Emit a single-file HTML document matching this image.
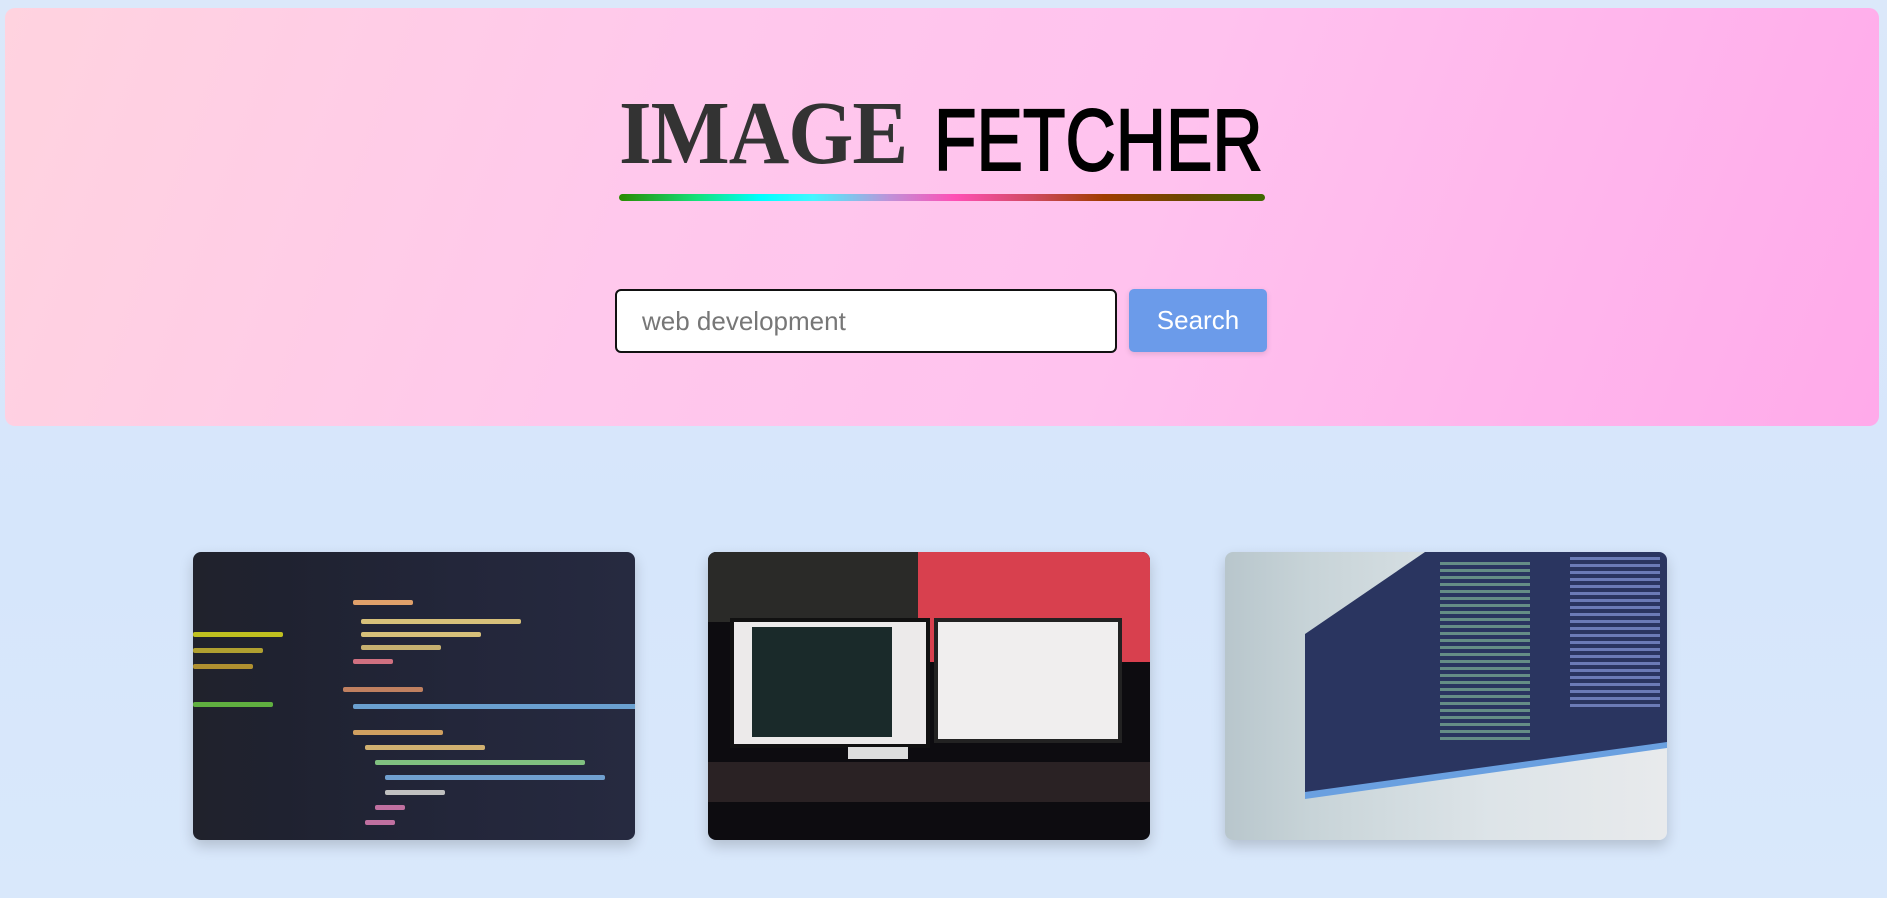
<!DOCTYPE html>
<html><head><meta charset="utf-8"><style>
*{margin:0;padding:0;box-sizing:border-box}
html,body{width:1887px;height:898px;overflow:hidden}
body{background:linear-gradient(180deg,#dbe8fa 0%,#d6e6fb 60%,#d9e8fb 100%);font-family:"Liberation Sans",sans-serif;position:relative}
.hdr{position:absolute;left:5px;top:8px;width:1874px;height:418px;border-radius:10px;background:linear-gradient(110deg,#ffd3df 0%,#ffc8ec 35%,#ffc2ee 60%,#ffaaea 100%)}
.t1{position:absolute;left:619px;top:82px;font-family:"Liberation Serif",serif;font-weight:bold;font-size:90px;color:#333;letter-spacing:-1px;transform:scaleX(0.93);transform-origin:left}
.t2{position:absolute;left:934px;top:91px;font-family:"Liberation Sans",sans-serif;font-size:87px;color:#000;-webkit-text-stroke:2px #000;transform:scaleX(0.80);transform-origin:left}
.bar{position:absolute;left:619px;top:194px;width:646px;height:7px;border-radius:4px;background:linear-gradient(90deg,#2a8a00 0%,#14e07a 12%,#00ffff 22%,#44f6ff 30%,#c090d8 42%,#ff4fb5 52%,#d04a60 64%,#a03c00 75%,#6a4800 88%,#3d6800 100%)}
.inp{position:absolute;left:615px;top:289px;width:502px;height:64px;border:2px solid #111;border-radius:6px;background:#fff;font-size:26px;color:#777;padding:15px 25px}
.btn{position:absolute;left:1129px;top:289px;width:138px;height:63px;border-radius:5px;background:#6b9bea;color:#fff;font-size:26px;text-align:center;line-height:63px;box-shadow:0 2px 6px rgba(0,0,0,.12)}
.img{position:absolute;top:552px;width:442px;height:288px;border-radius:8px;overflow:hidden;box-shadow:0 6px 14px rgba(0,0,0,.18)}
.l{position:absolute;height:5px;border-radius:2px}
</style></head><body>
<div class="hdr"></div>
<div class="t1">IMAGE</div>
<div class="t2">FETCHER</div>
<div class="bar"></div>
<div class="inp">web development</div>
<div class="btn">Search</div>

<div class="img" style="left:193px;background:linear-gradient(90deg,#20222c 0%,#1f2230 20%,#23263a 60%,#262a40 100%)">
<div class="l" style="left:160px;top:48px;width:60px;background:#e0a06a"></div>
<div class="l" style="left:168px;top:67px;width:160px;background:#d7c07a"></div>
<div class="l" style="left:168px;top:80px;width:120px;background:#d7c07a"></div>
<div class="l" style="left:168px;top:93px;width:80px;background:#c6b070"></div>
<div class="l" style="left:160px;top:107px;width:40px;background:#d07080"></div>
<div class="l" style="left:150px;top:135px;width:80px;background:#c08060"></div>
<div class="l" style="left:160px;top:152px;width:290px;background:#6aa0d0"></div>
<div class="l" style="left:160px;top:178px;width:90px;background:#d0a060"></div>
<div class="l" style="left:172px;top:193px;width:120px;background:#d0b070"></div>
<div class="l" style="left:182px;top:208px;width:210px;background:#80c080"></div>
<div class="l" style="left:192px;top:223px;width:220px;background:#70a0d0"></div>
<div class="l" style="left:192px;top:238px;width:60px;background:#c0c0c0"></div>
<div class="l" style="left:182px;top:253px;width:30px;background:#c070a0"></div>
<div class="l" style="left:172px;top:268px;width:30px;background:#c070a0"></div>
<div class="l" style="left:0px;top:80px;width:90px;background:#c0c020"></div>
<div class="l" style="left:0px;top:96px;width:70px;background:#b0a030"></div>
<div class="l" style="left:0px;top:112px;width:60px;background:#b09030"></div>
<div class="l" style="left:0px;top:150px;width:80px;background:#60b040"></div>
</div>

<div class="img" style="left:708px;background:#0d0c10">
<div style="position:absolute;left:210px;top:0;width:232px;height:110px;background:#d8404e"></div>
<div style="position:absolute;left:0;top:0;width:210px;height:70px;background:#2a2a28"></div>
<div style="position:absolute;left:22px;top:66px;width:200px;height:130px;background:#eceaea;border:4px solid #111"></div>
<div style="position:absolute;left:44px;top:75px;width:140px;height:110px;background:#1a2a2a"></div>
<div style="position:absolute;left:226px;top:66px;width:188px;height:125px;background:#f0eeee;border:4px solid #222"></div>
<div style="position:absolute;left:0;top:210px;width:442px;height:40px;background:#2a2224"></div>
<div style="position:absolute;left:140px;top:195px;width:60px;height:12px;background:#ddd"></div>
</div>

<div class="img" style="left:1225px;background:linear-gradient(90deg,#b8c6cc 0%,#c8d4d8 20%,#dde4e8 60%,#e8eaec 100%)">
<div style="position:absolute;left:0;top:0;width:442px;height:288px;background:#2a3560;clip-path:polygon(80px 82px,200px 0,442px 0,442px 195px,80px 245px)"></div>
<div style="position:absolute;left:0;top:0;width:442px;height:288px;background:#6aa0e0;clip-path:polygon(80px 240px,442px 190px,442px 196px,80px 247px)"></div>
<div style="position:absolute;left:215px;top:10px;width:90px;height:180px;background:repeating-linear-gradient(180deg,rgba(140,200,160,.6) 0 3px,transparent 3px 7px)"></div>
<div style="position:absolute;left:345px;top:5px;width:90px;height:150px;background:repeating-linear-gradient(180deg,rgba(150,170,240,.6) 0 3px,transparent 3px 7px)"></div>
</div>
</body></html>
